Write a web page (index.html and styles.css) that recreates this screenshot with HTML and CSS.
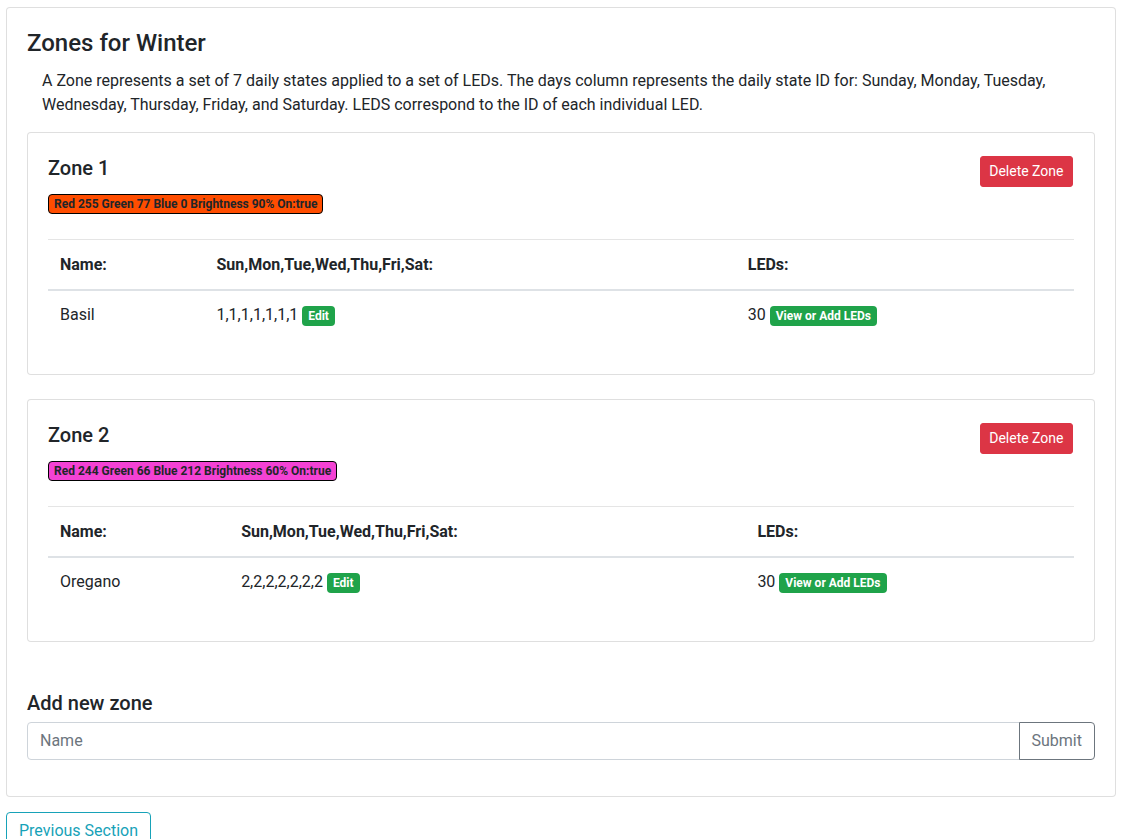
FILE: index.html
```html
<!DOCTYPE html>
<html>
<head>
<meta charset="utf-8">
<link rel="stylesheet" href="styles.css">
</head>
<body>
<div class="card outer">
  <div class="card-body">
    <h4 class="page-title">Zones for Winter</h4>
    <p class="intro">A Zone represents a set of 7 daily states applied to a set of LEDs. The days column represents the daily state ID for: Sunday, Monday, Tuesday, Wednesday, Thursday, Friday, and Saturday. LEDS correspond to the ID of each individual LED.</p>

    <div class="card zone">
      <div class="card-body">
        <div class="zone-head">
          <div>
            <h5 class="zone-title">Zone 1</h5>
            <span class="badge badge-orange">Red 255 Green 77 Blue 0 Brightness 90% On:true</span>
          </div>
          <button class="btn btn-sm btn-danger">Delete Zone</button>
        </div>
        <hr>
        <table class="table">
          <thead>
            <tr><th>Name:</th><th>Sun,Mon,Tue,Wed,Thu,Fri,Sat:</th><th>LEDs:</th></tr>
          </thead>
          <tbody>
            <tr><td>Basil</td><td>1,1,1,1,1,1,1 <span class="badge badge-success">Edit</span></td><td>30 <span class="badge badge-success">View or Add LEDs</span></td></tr>
          </tbody>
        </table>
      </div>
    </div>

    <div class="card zone">
      <div class="card-body">
        <div class="zone-head">
          <div>
            <h5 class="zone-title">Zone 2</h5>
            <span class="badge badge-pink">Red 244 Green 66 Blue 212 Brightness 60% On:true</span>
          </div>
          <button class="btn btn-sm btn-danger">Delete Zone</button>
        </div>
        <hr>
        <table class="table">
          <thead>
            <tr><th>Name:</th><th>Sun,Mon,Tue,Wed,Thu,Fri,Sat:</th><th>LEDs:</th></tr>
          </thead>
          <tbody>
            <tr><td>Oregano</td><td>2,2,2,2,2,2,2 <span class="badge badge-success">Edit</span></td><td>30 <span class="badge badge-success">View or Add LEDs</span></td></tr>
          </tbody>
        </table>
      </div>
    </div>

    <h5 class="add-title">Add new zone</h5>
    <div class="input-group">
      <input class="form-control" type="text" placeholder="Name">
      <button class="btn btn-outline-secondary">Submit</button>
    </div>
  </div>
</div>
<button class="btn btn-outline-info prev">Previous Section</button>
</body>
</html>
```

FILE: styles.css
```css
* { box-sizing: border-box; }
html, body { margin: 0; }
body {
  padding: 7px 6px 0 6px;
  font-family: Roboto, "Liberation Sans", sans-serif;
  font-size: 16px;
  line-height: 1.5;
  color: #212529;
  background: #fff;
}
.card {
  border: 1px solid rgba(0,0,0,.125);
  border-radius: 4px;
  background: #fff;
}
.card-body { padding: 20px; }
.outer { width: 1110px; }
h4, h5 { margin: 0; font-weight: 500; line-height: 1.2; }
.page-title { font-size: 24px; margin-top: 1px; margin-bottom: 11px; }
.intro { margin: 0 0 15px 0; padding: 0 15px; }
.zone { margin-bottom: 24px; }
.zone-head { display: flex; justify-content: space-between; align-items: flex-start; }
.zone-title { font-size: 20px; margin-bottom: 11px; margin-top: 3px; }
.badge {
  display: inline-block;
  padding: 3px 5px;
  font-size: 12px;
  font-weight: 700;
  line-height: 1;
  border-radius: 4px;
  vertical-align: baseline;
  white-space: nowrap;
}
.badge-orange { background: #ff4d00; border: 1px solid #000; color: #212529; }
.badge-pink { background: #f442d4; border: 1px solid #000; color: #212529; }
.badge-success { background: #1fa34a; color: #fff; padding: 4px 6px; }
hr {
  margin: 24px 0 0 0;
  border: 0;
  border-top: 1px solid rgba(0,0,0,.1);
}
.table { width: 100%; border-collapse: collapse; margin-bottom: 16px; }
.table th, .table td { padding: 12px; text-align: left; vertical-align: top; border-top: 1px solid #dee2e6; }
.table thead th { border-top: 0; border-bottom: 2px solid #dee2e6; font-weight: 700; vertical-align: bottom; padding-top: 13px; padding-bottom: 12px; }
.table tbody td { padding-bottom: 11px; }
.table tbody tr:first-child td { border-top: 0; }
.btn {
  display: inline-block;
  font-family: inherit;
  font-weight: 400;
  text-align: center;
  border: 1px solid transparent;
  padding: 6px 12px;
  font-size: 16px;
  line-height: 1.5;
  border-radius: 4px;
  background: transparent;
  cursor: pointer;
}
.btn-sm { padding: 4px 8.5px; font-size: 14px; line-height: 1.5; border-radius: 3px; }
.btn-danger { background: #dc3545; border-color: #dc3545; color: #fff; margin-top: 3px; margin-right: 1px; }
.add-title { font-size: 20px; margin-top: 49px; margin-bottom: 7px; }
.input-group { display: flex; margin-bottom: 16px; }
.form-control {
  flex: 1 1 auto;
  height: 38px;
  padding: 6px 12px;
  font-family: inherit;
  font-size: 16px;
  color: #495057;
  border: 1px solid #ced4da;
  border-radius: 4px 0 0 4px;
  outline: none;
}
.form-control::placeholder { color: #6c757d; }
.btn-outline-secondary { color: #6c757d; border-color: #6c757d; border-radius: 0 4px 4px 0; margin-left: -1px; }
.btn-outline-info { color: #17a2b8; border-color: #17a2b8; }
.prev { margin-top: 15px; }
```
